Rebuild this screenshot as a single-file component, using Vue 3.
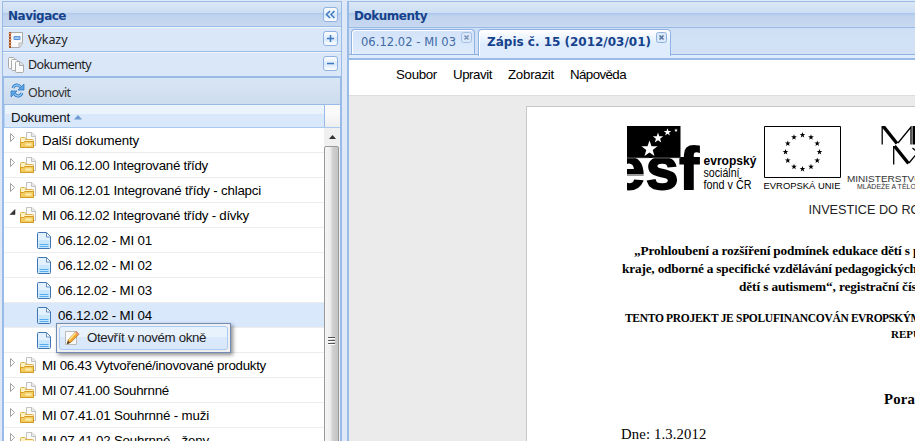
<script setup>
const tree = [
  { text: 'Další dokumenty', kind: 'folder', w: 97 },
  { text: 'MI 06.12.00 Integrované třídy', kind: 'folder', w: 166 },
  { text: 'MI 06.12.01 Integrované třídy - chlapci', kind: 'folder', w: 219 },
  { text: 'MI 06.12.02 Integrované třídy - dívky', kind: 'folder', open: true, w: 207 },
  { text: '06.12.02 - MI 01', kind: 'file', w: 94 },
  { text: '06.12.02 - MI 02', kind: 'file', w: 94 },
  { text: '06.12.02 - MI 03', kind: 'file', w: 94 },
  { text: '06.12.02 - MI 04', kind: 'file', selected: true, w: 94 },
  { text: '', kind: 'file', w: 94 },
  { text: 'MI 06.43 Vytvořené/inovované produkty', kind: 'folder', w: 224 },
  { text: 'MI 07.41.00 Souhrnné', kind: 'folder', w: 127 },
  { text: 'MI 07.41.01 Souhrnné - muži', kind: 'folder', w: 167 },
  { text: 'MI 07.41.02 Souhrnné - ženy', kind: 'folder', w: 167 },
]
const menu = [
  { text: 'Soubor', w: 41 },
  { text: 'Upravit', w: 39 },
  { text: 'Zobrazit', w: 46 },
  { text: 'Nápověda', w: 56 },
]
const star = (cx, cy, r) =>
  Array.from({ length: 10 }, (_, i) => {
    const q = i % 2 ? r * 0.4 : r
    const a = -Math.PI / 2 + (i * Math.PI) / 5
    return `${(cx + q * Math.cos(a)).toFixed(2)},${(cy + q * Math.sin(a)).toFixed(2)}`
  }).join(' ')
const euStars = Array.from({ length: 12 }, (_, i) => {
  const a = (i * Math.PI) / 6
  return star(175.5 + 17 * Math.sin(a), 26 - 17 * Math.cos(a), 3)
})
const esfStars = [star(22.5, 23, 8.5), star(31, 12, 5.5), star(40.5, 6.2, 4), star(49, 4.3, 2)]

const vTrack = {
  mounted(el, { value }) {
    const natural = el.getBoundingClientRect().width
    el.style.letterSpacing = `${(value - natural) / el.textContent.length}px`
  },
}
</script>

<template>
  <div class="app">
    <aside class="nav">
      <header class="title">
        <span v-track="58" class="bold">Navigace</span>
        <i class="tool"><svg width="15" height="15"><path d="M7 4 3.5 7.5 7 11M11.5 4 8 7.5 11.5 11" /></svg></i>
      </header>
      <div class="acc">
        <svg class="ic" width="16" height="16">
          <path d="M2.5.5h12v11l-3 4h-9z" fill="#fafafa" stroke="#aaa" /><path d="M11 15v-4h4" fill="#ddd" stroke="#bbb" />
          <path d="M2 0v16" stroke="#a85428" stroke-width="2" /><path d="M.5 1.5h3m-3 3h3m-3 3h3m-3 3h3m-3 3h3" stroke="#d8a078" />
          <path d="M6 4.500h6v3H6z" fill="#9ec5ef" stroke="#5a94d8" />
        </svg>
        <span v-track="39.500">Výkazy</span>
        <i class="tool"><svg width="15" height="15"><path d="M4 7.500h7M7.500 4v7" /></svg></i>
      </div>
      <div class="acc">
        <svg class="ic" width="16" height="16" fill="#fafafa" stroke="#aaa">
          <path d="M.5 1.500q0-1 1-1h4l3 3v8h-7q-1 0-1-1z" /><path d="M3.500 3.500q0-1 1-1h4l3 3v8h-7q-1 0-1-1z" /><path d="M7.500 5.500q0-1 1-1h3.500l3.500 3.500v6.500q0 1-1 1h-6q-1 0-1-1zM11.500 5v3.500h3.500" />
        </svg>
        <span v-track="63">Dokumenty</span>
        <i class="tool"><svg width="15" height="15"><path d="M4 7.500h7" /></svg></i>
      </div>
      <div class="body">
        <div class="toolbar">
          <svg class="ic" width="15" height="15" fill="none">
            <path d="M3 5C4.500 1.500 8 1 10.500 4" stroke="#2a6fbb" stroke-width="3" /><path d="M3 5C4.500 1.500 8 1 10.500 4" stroke="#8cc8f5" stroke-width="1.400" />
            <path d="M14 1v6H8z" fill="#5aa8e8" stroke="#2a6fbb" stroke-width=".7" />
            <path d="M12 10C10.500 13.500 7 14 4.500 11" stroke="#2a6fbb" stroke-width="3" /><path d="M12 10C10.500 13.500 7 14 4.500 11" stroke="#8cc8f5" stroke-width="1.400" />
            <path d="M1 14V8h6z" fill="#5aa8e8" stroke="#2a6fbb" stroke-width=".7" />
          </svg>
          <span v-track="42.500">Obnovit</span>
        </div>
        <div class="colhead">
          <div class="col"><span v-track="59">Dokument</span><svg width="8" height="5"><path d="M4 0 8 4.500H0z" fill="#6c9bd2" /></svg></div>
          <div class="corner"></div>
        </div>
        <div class="grid">
          <div class="rows">
            <div v-for="(n, i) in tree" :key="i" class="row" :class="[n.kind, { selected: n.selected }]">
              <svg v-if="n.kind === 'folder'" class="arrow" width="8" height="9">
                <path v-if="n.open" d="M6 1.500v5H1z" fill="#333" stroke="#222" stroke-width=".5" />
                <path v-else d="M1.500.500 5.500 4.500 1.500 8.500z" fill="#fff" stroke="#999" stroke-width=".9" />
              </svg>
              <svg v-if="n.kind === 'folder'" class="fi" width="16" height="17">
                <path d="M6.500.500h5.500l3.500 3.500v9.500h-9z" fill="#fafafa" stroke="#c2c2c2" /><path d="M11.500.500v4h4" fill="#e8e8e8" stroke="#c2c2c2" />
                <path d="M.5 15.500v-9q0-1 1-1h3q1 0 1 1v1h7q1 0 1 1v7z" fill="#fff2c0" stroke="#dcae4c" />
                <path d="M.5 10.500h3l1.500-1h8.500v6H.5z" fill="#f3cb5e" stroke="#d39a26" /><path d="M5.500 11.500h6v2h-6z" fill="#fdeeb4" />
              </svg>
              <svg v-else class="fi" width="14" height="17">
                <path d="M.5 1.500q0-1 1-1h8l4 4v11q0 1-1 1h-11q-1 0-1-1z" fill="#e2f1fd" stroke="#3f75b5" /><path d="M1.500 8h11v8h-11z" fill="#c8e6fc" />
                <path d="M9.500 1v4h4" fill="#fff" stroke="#3f75b5" stroke-width=".8" /><path d="M2.500 12.500h9M2.500 14.500h9" stroke="#55adf0" />
              </svg>
              <span v-if="n.text" v-track="n.w">{{ n.text }}</span>
            </div>
          </div>
          <div class="scroll">
            <div class="up"><svg width="7" height="4"><path d="M3.500 0 7 4H0z" fill="#333" /></svg></div>
            <div class="thumb"><b></b><b></b><b></b></div>
          </div>
        </div>
      </div>
    </aside>

    <main class="docs">
      <header class="title"><span v-track="73" class="bold">Dokumenty</span></header>
      <div class="tabs">
        <div class="tab one"><span v-track="95">06.12.02 - MI 03</span><svg class="x" width="11" height="11"><rect x=".5" y=".5" width="10" height="10" rx="2" /><path d="m3.500 3.500 4 4m0-4-4 4" /></svg></div>
        <div class="tab two active"><span v-track="164">Zápis č. 15 (2012/03/01)</span><svg class="x" width="11" height="11"><rect x=".5" y=".5" width="10" height="10" rx="2" /><path d="m3.500 3.500 4 4m0-4-4 4" /></svg></div>
      </div>
      <div class="strip"></div>
      <nav class="menubar"><span v-for="m in menu" :key="m.text"><span v-track="m.w">{{ m.text }}</span></span></nav>
      <div class="canvas">
        <article class="page">
          <svg class="logos" width="330" height="95" font-family="'Liberation Sans', Arial, sans-serif">
            <path d="M0 0h53.500v32H0z" />
            <polygon v-for="s in esfStars" :key="s" :points="s" fill="#fff" />
            <text x="-15" y="62.500" font-size="59" font-weight="bold" textLength="87" lengthAdjust="spacing" stroke="#000" stroke-width="1.800">esf</text>
            <path d="M0 32h22M25 32h28.500" stroke="#aaa" stroke-width=".6" />
            <path d="M0 49h21" stroke="#fff" stroke-width="1.200" />
            <g font-size="12">
              <text x="76.500" y="38.500" font-weight="bold" textLength="53" lengthAdjust="spacingAndGlyphs">evropský</text>
              <text x="76.500" y="51" textLength="36" lengthAdjust="spacingAndGlyphs">sociální</text>
              <text x="76.500" y="63" textLength="48" lengthAdjust="spacingAndGlyphs">fond v ČR</text>
            </g>
            <path d="M137.500.500h76v51h-76z" fill="#fff" stroke="#000" />
            <polygon v-for="s in euStars" :key="s" :points="s" />
            <text x="136.500" y="62.500" font-size="9" textLength="77" lengthAdjust="spacingAndGlyphs">EVROPSKÁ UNIE</text>
            <g fill="none" stroke="#000">
              <path d="M255.200 18.500V0M271 17 284 1v17.500" stroke-width="1.300" /><path d="m256 0 14 17.500" stroke-width="3.400" /><path d="M287 0v18.500" stroke-width="3" />
              <path d="M266.700 38.500V20M282 37l14-17v18" stroke-width="1.300" /><path d="m267.500 20 14 17.500" stroke-width="3.400" /><path d="m285.500 22 3 2.500" stroke-width="1.300" />
            </g>
            <text x="220" y="55.500" font-size="9" textLength="75" lengthAdjust="spacingAndGlyphs" fill="#333">MINISTERSTVO</text>
            <text x="230" y="63" font-size="7.500" textLength="93" lengthAdjust="spacingAndGlyphs" fill="#333">MLÁDEŽE A TĚLOVÝCHOVY</text>
            <text x="181.500" y="88" font-size="13" textLength="138" lengthAdjust="spacingAndGlyphs" fill="#222">INVESTICE DO ROZVO</text>
          </svg>
          <p class="l1"><span v-track="279">„Prohloubení a rozšíření podmínek edukace dětí s </span>poruchou</p>
          <p class="l2"><span v-track="287.500">kraje, odborné a specifické vzdělávání pedagogickýc</span>h</p>
          <p class="l3"><span v-track="163">dětí s autismem“, registrační </span>číslo</p>
          <p class="l4"><span v-track="226">TENTO PROJEKT JE SPOLUFINANCOVÁN </span><span v-track="59.500">EVROPSKÝ</span>M</p>
          <p class="l5">REPUBLIKY</p>
          <p class="l6"><span v-track="31">Pora</span>da</p>
          <p class="l7"><span v-track="85.500">Dne: 1.3.2012</span></p>
        </article>
      </div>
    </main>

    <div class="ctx">
      <div class="item">
        <svg width="16" height="16">
          <path d="M1.500 1.500h11v13h-11z" fill="#fafafa" stroke="#bbb" /><path d="m3 14 1.500-4.500L12 1.500l3 2.700-8 8z" fill="#f0a830" stroke="#a8712a" stroke-width=".8" />
          <path d="m5 10 7-7.500" stroke="#ffe28a" stroke-width="1.500" /><path d="m3 14 1-3 2 1.800z" fill="#333" /><path d="m11 2.600 1.300-1.400 3 2.700L14 5.300z" fill="#df9184" />
        </svg>
        <span v-track="119">Otevřít v novém okně</span>
      </div>
    </div>
  </div>
</template>

<style>
body { margin: 0; overflow: hidden; }
</style>

<style scoped>
.app { position: relative; box-sizing: border-box; width: 915px; height: 441px; padding-top: 1px; overflow: hidden; display: flex; gap: 5px; background: #dfe8f6; font: 13.300px/16px "Liberation Sans", Arial, sans-serif; color: #111; white-space: nowrap; }
.app * { box-sizing: border-box; }
.nav { width: 340px; height: 440px; margin-left: 2px; border: 1px solid #99bbe8; border-bottom: 0; }
.title { height: 25px; display: flex; align-items: center; padding: 3px 3px 0 5px; background: linear-gradient(#dae7f6, #cddef3 45%, #abc7ec 46%, #bfd3ee 55%, #c8d9f0); border-bottom: 1px solid #99bbe8; }
.bold { font: bold 12px/16px "DejaVu Sans", sans-serif; color: #15428b; }
.tool { margin-left: auto; width: 15px; height: 15px; border: 1px solid #8fb2e2; border-radius: 3px; background: linear-gradient(#fff, #d7e8fb 55%, #fff); display: flex; align-items: center; justify-content: center; }
.title .tool { margin-bottom: 2px; }
.acc .tool { margin-bottom: 2px; }
.tool svg { flex: none; fill: none; stroke: #3f78bc; stroke-width: 1.500; }
.acc { height: 25px; display: flex; align-items: center; padding: 0 3px 0 5px; gap: 4px; background: #d9e7f8; border-bottom: 1px solid #99bbe8; border-top: 1px solid #f0f6fc; font-family: "Noto Sans", sans-serif; font-size: 12.500px; color: #222; }
.ic { flex: none; }
.body { height: 364px; border: solid #99bbe8; border-width: 1px 1px 0; }
.toolbar { height: 27px; display: flex; align-items: center; gap: 4px; padding: 3px 0 0 5px; background: linear-gradient(#d9e6f4, #cddcee); border-bottom: 1px solid #99bbe8; color: #333; font-family: "Noto Sans", sans-serif; font-size: 12.500px; }
.toolbar svg { margin: -4px 0 0 1px; }
.toolbar span { margin-left: -1px; }
.colhead { height: 24px; margin-bottom: -1px; display: flex; border-bottom: 1px solid #a9c9f0; }
.colhead { height: 23px; margin-bottom: 0; }
.col { width: 321px; display: flex; align-items: center; gap: 4px; padding: 3px 0 0 6px; border-left: 1px solid #b7d2f2; border-right: 1px solid #99bbe8; background: linear-gradient(#ebf3fd 42%, #d9e8fb 43%); }
.corner { flex: 1; background: linear-gradient(#fafafa 40%, #ededed); }
.grid { height: 313px; display: flex; overflow: hidden; background: #fff; }
.rows { width: 320px; }
.row { height: 25px; display: flex; align-items: center; border-bottom: 1px solid #ededed; color: #000; }
.row.folder { padding-left: 4px; }
.row.file { padding-left: 33px; }
.row > span { padding-top: 1px; }
.arrow { flex: none; margin: -6px 4px 0 1px; }
.folder .fi { margin: 0 6px 0 -1px; }
.fi { flex: none; }
.file .fi { margin-right: 7px; }
.row.selected { background: #d9e8fb; }
.scroll { width: 16px; background: #f0f0f0; }
.up { height: 18px; display: flex; align-items: center; justify-content: center; }
.thumb { height: 392px; width: 15px; padding-bottom: 4px; border: 1px solid #999; border-radius: 2px; background: linear-gradient(90deg, #f5f5f5, #eee 40%, #cfcfcf 60%, #c4c4c4); display: flex; flex-direction: column; justify-content: center; align-items: center; gap: 2px; }
.thumb b { width: 7px; height: 1px; background: #555; box-shadow: 0 1px #fff; }
.docs { width: 568px; height: 440px; border: solid #99bbe8; border-width: 1px 0 0 2px; }
.docs .title { height: 26px; }
.tabs { height: 27px; display: flex; gap: 3px; padding: 1px 0 0 2px; background: linear-gradient(#cedff5, #d3e1f5); border-bottom: 1px solid #8db2e3; }
.tab { height: 25px; display: flex; border: 1px solid #8db2e3; border-bottom: 0; border-radius: 4px 4px 0 0; box-shadow: inset 1px 1px #fff; }
.tab.one { width: 124px; padding-left: 9px; background: linear-gradient(#d2e2f8, #deecfd); color: #416aa3; font: 11.500px/16px "DejaVu Sans", sans-serif; }
.tab.two { width: 193px; height: 27px; padding-left: 8px; background: linear-gradient(#fff, #deecfd 55%); color: #15428b; font: bold 12px/16px "DejaVu Sans", sans-serif; }
.tab > span { width: fit-content; height: 16px; margin-top: 4px; }
.x { flex: none; margin: 2px 0 0 5px; fill: #dce9fa; stroke: #8eb0dc; }
.x path { stroke: #56749e; stroke-width: 1.600; }
.one .x { opacity: .7; }
.strip { height: 5px; background: #deecfd; border-bottom: 2px solid #99bbe8; }
.menubar { height: 36px; padding: 7px 0 0 47px; display: flex; gap: 16px; background: #fff; color: #000; border-bottom: 1px solid #ddd; }
.canvas { height: 345px; padding: 10px 0 0 177px; background: #ebebeb; overflow: hidden; }
.page { width: 620px; height: 500px; border: 1px solid #c8c8c8; background: #fff; padding: 19px 0 0 94px; font-family: "Liberation Serif", "Times New Roman", serif; color: #000; }
.logos { display: block; margin: 0 0 21px 6px; }
.page p { margin: 0; height: 18px; line-height: 18px; font-size: 13.300px; font-weight: bold; }
.page .l1 { padding-left: 13px; }
.page .l2 { padding-left: 1px; }
.page .l3 { padding-left: 118px; }
.page .l4 { padding-left: 4px; margin-top: 14px; font-size: 11.500px; height: 16px; line-height: 16px; }
.page .l5 { padding-left: 270px; font-size: 11px; height: 16px; line-height: 16px; }
.page .l6 { padding-left: 263px; margin-top: 48px; font-size: 14.700px; }
.page .l7 { margin-top: 17px; font-size: 14.700px; font-weight: normal; }
.ctx { position: absolute; left: 56px; top: 323px; width: 175px; height: 30px; padding: 2px; border: 1px solid #718bb7; background: #f0f0f0; box-shadow: 2px 2px 4px rgba(0, 0, 0, .45); }
.item { height: 24px; display: flex; align-items: center; gap: 7px; padding-left: 4px; border: 1px solid #a9cbf5; border-radius: 3px; background: linear-gradient(#e8f2fd 45%, #d9e8fb 46%); color: #222; }
</style>
